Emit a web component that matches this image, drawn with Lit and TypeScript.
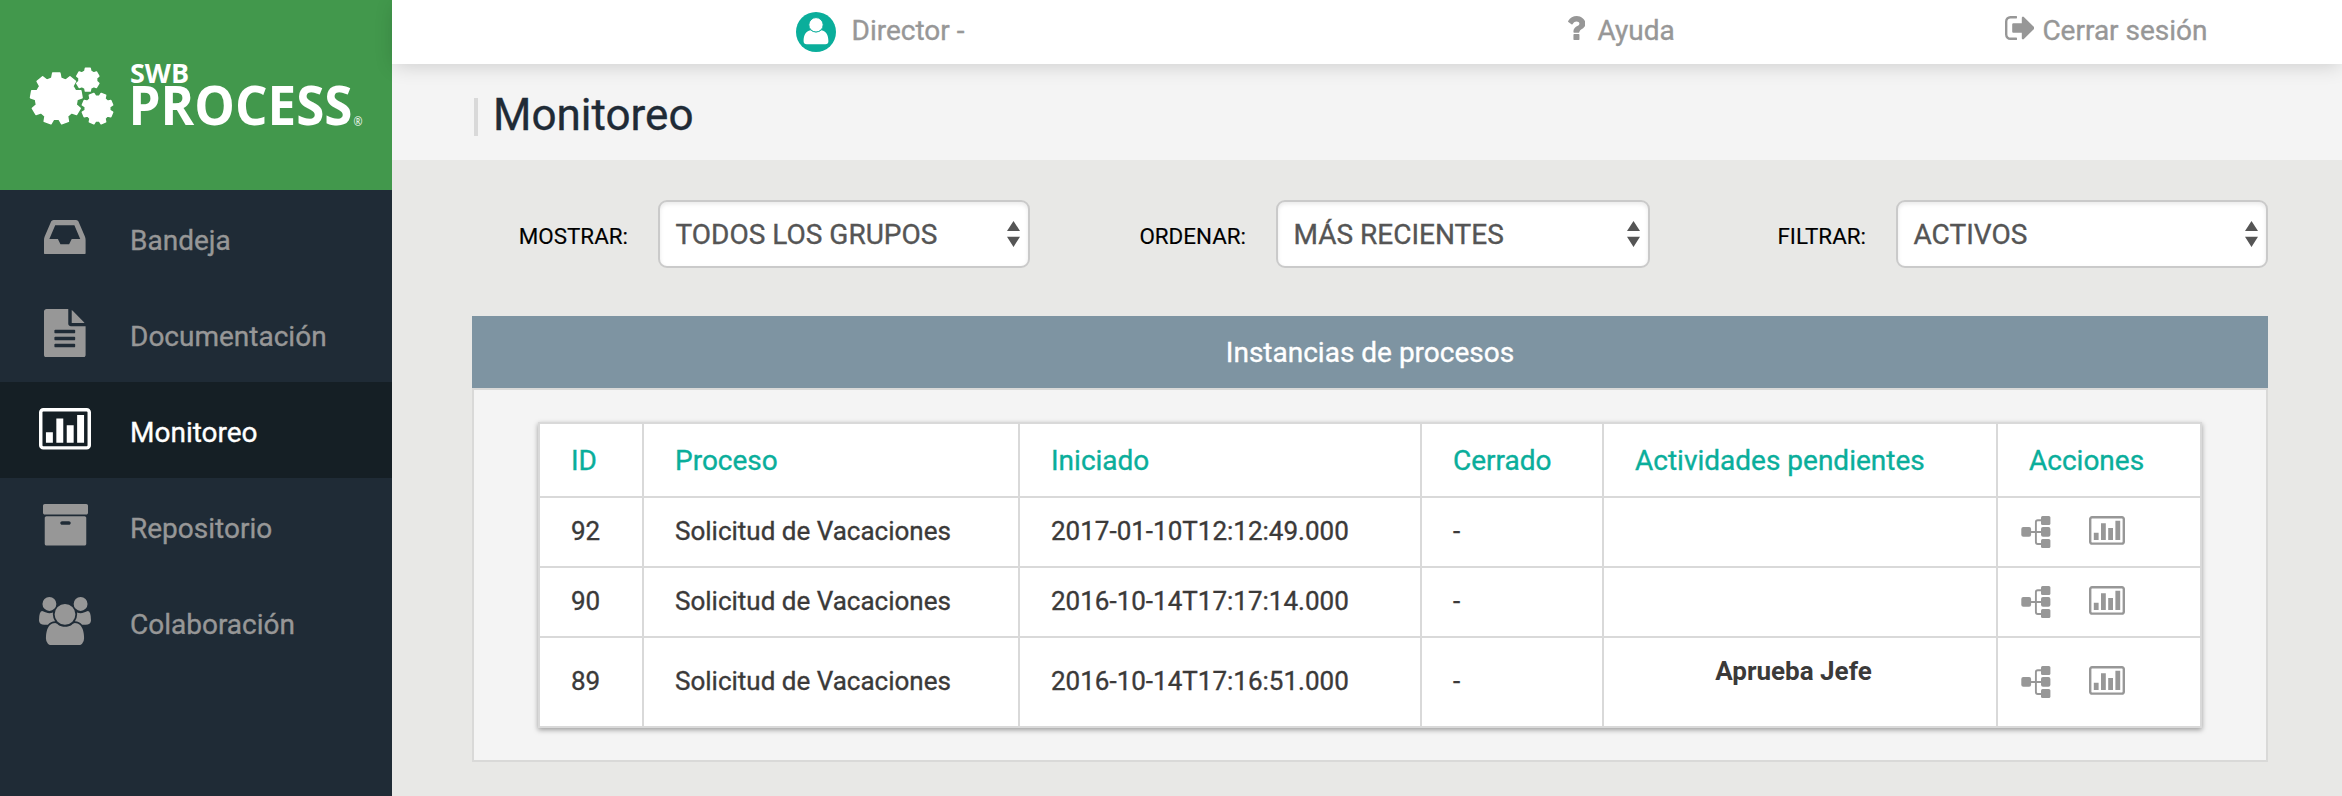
import { LitElement, html, svg, css } from "lit";
import { customElement, property } from "lit/decorators.js";
import { classMap } from "lit/directives/class-map.js";

/** Outline of a gear: trapezoid teeth around a disc. */
function gear(cx: number, cy: number, outer: number, root: number, teeth: number, phase: number): string {
  const step = (Math.PI * 2) / teeth;
  const pts: string[] = [];
  for (let i = 0; i < teeth; i++) {
    const a = phase + i * step;
    const corners: [number, number][] = [
      [root, -0.32], [outer, -0.2], [outer, 0.2], [root, 0.32],
    ];
    for (const [r, f] of corners) {
      const t = a + f * step;
      pts.push(`${(cx + r * Math.cos(t)).toFixed(2)},${(cy + r * Math.sin(t)).toFixed(2)}`);
    }
  }
  return `M${pts.join("L")}Z`;
}

const chart = svg`
  <path fill-rule="evenodd" d="M160 0h1600q66 0 113 47t47 113v1216q0 66-47 113t-113 47h-1600q-66 0-113-47t-47-113v-1216q0-66 47-113t113-47zM160 128q-32 0-32 32v1216q0 32 32 32h1600q32 0 32-32v-1216q0-32-32-32z"/>
  <path d="M256 896h256v384h-256zM640 384h256v896h-256zM1024 640h256v640h-256zM1408 256h256v1024h-256z"/>`;

const icons: Record<string, { box: string; w: number; h: number; art: unknown }> = {
  inbox: {
    box: "0 128 1536 1280", w: 41.6, h: 34.7,
    art: svg`<path d="M1023 832h316q-1-3-2.500-8t-2.500-8l-212-496h-708l-212 496q-1 2-2.500 8t-2.500 8h316l95 192h320zM1536 862v482q0 26-19 45t-45 19h-1408q-26 0-45-19t-19-45v-482q0-62 25-123l238-552q10-25 36.500-42t52.500-17h832q26 0 52.500 17t36.500 42l238 552q25 61 25 123z"/>`,
  },
  file: {
    box: "128 0 1536 1792", w: 41.6, h: 48.6,
    art: svg`<path d="M1596 476q14 14 28 36h-472v-472q22 14 36 28zm-476 164h544v1056q0 40-28 68t-68 28h-1344q-40 0-68-28t-28-68v-1600q0-40 28-68t68-28h800v544q0 40 28 68t68 28zm160 736v-64q0-14-9-23t-23-9h-704q-14 0-23 9t-9 23v64q0 14 9 23t23 9h704q14 0 23-9t9-23zm0-256v-64q0-14-9-23t-23-9h-704q-14 0-23 9t-9 23v64q0 14 9 23t23 9h704q14 0 23-9t9-23zm0-256v-64q0-14-9-23t-23-9h-704q-14 0-23 9t-9 23v64q0 14 9 23t23 9h704q14 0 23-9t9-23z"/>`,
  },
  chart: { box: "0 0 1920 1536", w: 52, h: 41.6, art: chart },
  chartSmall: { box: "0 0 1920 1536", w: 36, h: 28.8, art: chart },
  archive: {
    box: "64 128 1664 1536", w: 45, h: 41.6,
    art: svg`<path d="M1088 832q0-26-19-45t-45-19h-256q-26 0-45 19t-19 45 19 45 45 19h256q26 0 45-19t19-45zm576-192v960q0 26-19 45t-45 19h-1408q-26 0-45-19t-19-45v-960q0-26 19-45t45-19h1408q26 0 45 19t19 45zm64-448v256q0 26-19 45t-45 19h-1536q-26 0-45-19t-19-45v-256q0-26 19-45t45-19h1536q26 0 45 19t19 45z"/>`,
  },
  group: {
    box: "64 0 1920 1792", w: 52, h: 48.6,
    art: svg`<path d="M657 896q-162 5-265 128h-134q-82 0-138-40.500t-56-118.500q0-353 124-353 6 0 43.500 21t97.500 42.500 119 21.500q67 0 133-23-5 37-5 66 0 139 81 256zm1071 637q0 120-73 189.500t-194 69.500h-874q-121 0-194-69.500t-73-189.500q0-53 3.500-103.500t14-109 26.500-108.500 43-97.500 62-81 85.500-53.500 111.500-20q10 0 43 21.500t73 48 107 48 135 21.500 135-21.500 107-48 73-48 43-21.500q61 0 111.500 20t85.500 53.500 62 81 43 97.500 26.500 108.500 14 109 3.500 103.500zm-1024-1277q0 106-75 181t-181 75-181-75-75-181 75-181 181-75 181 75 75 181zm704 384q0 159-112.500 271.500t-271.500 112.500-271.500-112.500-112.500-271.500 112.500-271.500 271.500-112.500 271.500 112.500 112.500 271.500zm576 225q0 78-56 118.500t-138 40.500h-134q-103-123-265-128 81-117 81-256 0-29-5-66 66 23 133 23 59 0 119-21.500t97.500-42.500 43.500-21q124 0 124 353zm-128-609q0 106-75 181t-181 75-181-75-75-181 75-181 181-75 181 75 75 181z"/>`,
  },
  question: {
    box: "94 192 926 1280", w: 17.4, h: 24,
    art: svg`<path d="M704 1192v240q0 16-12 28t-28 12h-240q-16 0-28-12t-12-28v-240q0-16 12-28t28-12h240q16 0 28 12t12 28zM1020 592q0 54-15.500 101t-35 76.500-55 59.500-57.500 43.500-61 35.500q-41 23-68.500 65t-27.500 67q0 17-12 32.500t-28 15.500h-240q-15 0-25.500-18.500t-10.500-37.500v-45q0-83 65-156.500t143-108.500q59-27 84-56t25-76q0-42-46.500-74t-107.500-32q-65 0-108 29-35 25-107 115-13 16-31 16-12 0-25-8l-164-125q-13-10-15.500-25t5.500-28q160-266 464-266 80 0 161 31t146 83 106 127.500 41 158.500z"/>`,
  },
  signout: {
    box: "0 256 1568 1280", w: 29.4, h: 24,
    art: svg`<path d="M640 1440q0 4 1 20t.5 26.500-3 23.500-10 19.500-20.500 6.500h-320q-119 0-203.500-84.500t-84.500-203.500v-704q0-119 84.500-203.500t203.500-84.500h320q13 0 22.500 9.500t9.500 22.500q0 4 1 20t.5 26.500-3 23.500-10 19.500-20.500 6.500h-320q-66 0-113 47t-47 113v704q0 66 47 113t113 47h312l11.500 1 11.500 3 8 5.500 7 9 2 13.500zm928-544q0 26-19 45l-544 544q-19 19-45 19t-45-19-19-45v-288h-448q-26 0-45-19t-19-45v-384q0-26 19-45t45-19h448v-288q0-26 19-45t45-19 45 19l544 544q19 19 19 45z"/>`,
  },
  tree: {
    box: "0 0 30 32", w: 30, h: 32,
    art: svg`<rect x="0.300" y="11" width="9.800" height="9.800" rx="2"/><rect x="20" y="0" width="9.400" height="9" rx="1.500"/><rect x="20" y="11" width="9.400" height="9.800" rx="2"/><rect x="20" y="23" width="9.400" height="9" rx="1.500"/><path d="M8 16h13M21 4.200h-4.200q-1.900 0-1.900 1.900v20q0 1.900 1.900 1.900h4.200" fill="none" stroke="currentColor" stroke-width="1.900"/>`,
  },
  arrows: {
    box: "0 0 13 26", w: 13, h: 26,
    art: svg`<path d="M6.500 0l6.500 10h-13zM6.500 26l6.500-10.300h-13z"/>`,
  },
  user: {
    box: "0 0 40 40", w: 40, h: 40,
    art: svg`<circle cx="20" cy="20" r="20" fill="#0aae9b"/><path fill="#fff" d="M14.500 18.300q5.500 4 11 0c4.700.8 6.900 5 6.900 11q0 3-3 3h-18.800q-3 0-3-3c0-6 2.200-10.200 6.900-11z"/><circle cx="20" cy="12.800" r="7.200" fill="#fff" stroke="#0aae9b" stroke-width="1"/>`,
  },
};

@customElement("app-icon")
export class AppIcon extends LitElement {
  @property() name = "";

  static styles = css`
    :host { display: inline-flex; flex: none; }
    .glyph { display: block; fill: currentColor; }
  `;

  render() {
    const i = icons[this.name];
    return html`<svg class="glyph" width=${i.w} height=${i.h} viewBox=${i.box} preserveAspectRatio="none">${i.art}</svg>`;
  }
}

@customElement("app-root")
export class AppRoot extends LitElement {
  private menu = [
    { icon: "inbox", label: "Bandeja" },
    { icon: "file", label: "Documentación" },
    { icon: "chart", label: "Monitoreo", active: true },
    { icon: "archive", label: "Repositorio" },
    { icon: "group", label: "Colaboración" },
  ];

  private filters = [
    { label: "MOSTRAR:", value: "TODOS LOS GRUPOS" },
    { label: "ORDENAR:", value: "MÁS RECIENTES" },
    { label: "FILTRAR:", value: "ACTIVOS" },
  ];

  private columns = ["ID", "Proceso", "Iniciado", "Cerrado", "Actividades pendientes", "Acciones"];

  private rows = [
    { id: 92, process: "Solicitud de Vacaciones", start: "2017-01-10T12:12:49.000", end: "-", pending: "" },
    { id: 90, process: "Solicitud de Vacaciones", start: "2016-10-14T17:17:14.000", end: "-", pending: "" },
    { id: 89, process: "Solicitud de Vacaciones", start: "2016-10-14T17:16:51.000", end: "-", pending: "Aprueba Jefe" },
  ];

  static styles = css`
    * { box-sizing: border-box; }
    :host {
      display: grid;
      grid-template-columns: 392px 1fr;
      height: 796px;
      overflow: hidden;
      font: 28px/40px Roboto, sans-serif;
      -webkit-text-stroke: 0.350px;
      color: #333;
      background: #e8e8e6;
    }
    .side { background: #1f2b36; }
    .logo { height: 190px; background: #42984c; }
    .logo svg { display: block; -webkit-text-stroke: 0; }
    .logo-text { font-family: "Open Sans", "Noto Sans", sans-serif; font-weight: 700; fill: #fff; }
    .logo-mark { font-family: "Open Sans", sans-serif; font-weight: 600; fill: #e6f3e7; }
    .menu { display: flex; flex-direction: column; }
    .item { display: flex; height: 96px; color: #979797; }
    .item.active { background: #151f25; color: #fff; }
    .item-icon { width: 130px; padding-bottom: 2px; display: flex; align-items: center; justify-content: center; }
    .item-label { padding-top: 31px; }

    .main { display: flex; flex-direction: column; min-width: 0; }
    .top {
      height: 64px;
      background: #fff;
      box-shadow: 0 4px 20px -2px rgba(0, 0, 0, 0.16);
      z-index: 1;
      display: grid;
      grid-template-columns: 404px 771px 437px 1fr;
      color: #979797;
    }
    .link { display: flex; align-items: flex-start; grid-row: 1; }
    .link.user { grid-column: 2; padding-top: 12px; gap: 15.500px; }
    .link.user span { margin-top: -1px; }
    .link.help { grid-column: 3; padding: 11px 0 0 1px; gap: 12px; }
    .link.exit { grid-column: 4; padding: 11px 0 0 1px; gap: 8px; }
    .link.help app-icon, .link.exit app-icon { margin-top: 5px; }
    .band { height: 96px; background: #f4f4f4; display: flex; padding: 34px 0 0 82px; }
    .title {
      margin: 0;
      height: 38px;
      border-left: 4.500px solid #d9d9d9;
      padding-left: 15px;
      font-size: 44px;
      font-weight: 400;
      line-height: 35px;
      color: #1f2b36;
    }
    .content { padding: 40px 74px 0 80px; display: flex; flex-direction: column; }
    .filters {
      display: grid;
      grid-template-columns: 186px 372px 246px 374px 246px 372px;
      height: 116px;
      align-items: start;
    }
    .filter-label {
      text-align: right;
      padding-right: 30px;
      font-size: 22.400px;
      line-height: 32px;
      padding-top: 20px;
      color: #000;
      -webkit-text-stroke: 0.150px;
    }
    .select {
      height: 68px;
      border: 2px solid #cacaca;
      border-radius: 9px;
      background: #fff;
      box-shadow: inset 0 2px 4px rgba(0, 0, 0, 0.09);
      display: flex;
      justify-content: space-between;
      align-items: center;
      padding: 0 8px 0 15.500px;
      color: #555;
    }
    .select-text { padding-top: 1px; }
    .panel-head {
      height: 72px;
      background: #7e94a2;
      color: #fff;
      text-align: center;
      line-height: 73px;
    }
    .panel-body {
      height: 374px;
      border: 2px solid #d9d9d8;
      background: #f4f4f4;
      padding: 32px 64px 0;
    }
    .grid {
      width: 1664px;
      border: 2px solid #d9d9d9;
      background: #d9d9d9;
      box-shadow: 0 2px 5px rgba(0, 0, 0, 0.36);
      display: grid;
      grid-template-columns: 102px 374px 400px 180px 392px 202px;
      grid-template-rows: 72px 68px 68px 88px;
      gap: 2px;
    }
    .cell {
      background: #fff;
      padding: 0 30px 2px 31px;
      display: flex;
      align-items: center;
      white-space: nowrap;
      font-size: 26px;
      color: #3b3a39;
    }
    .cell.head { color: #0aae9b; font-size: 28px; padding-bottom: 0; padding-top: 1px; }
    .cell.pending { padding: 13px 43px 0 30px; align-items: flex-start; justify-content: center; font-weight: 700; -webkit-text-stroke: 0; }
    .cell.actions { padding: 0 0 0 23px; gap: 37.500px; color: #979797; }
    .cell.actions .shift { padding-bottom: 3px; }
  `;

  private renderLogo() {
    const up = -Math.PI / 2;
    return svg`<svg width="392" height="190" viewBox="0 0 392 190">
      <g fill="#fff" stroke="#fff" stroke-width="1.500" stroke-linejoin="round">
        <path d=${gear(56.3, 98.6, 25.8, 20.8, 9, up)} />
        <path d=${gear(87.8, 79.7, 11.6, 9, 6, up)} />
        <path d=${gear(97.5, 108.6, 15.6, 12.4, 8, up + Math.PI / 8)} />
      </g>
      <text class="logo-text" x="130" y="83.300" font-size="27.500" textLength="59" lengthAdjust="spacingAndGlyphs">SWB</text>
      <text class="logo-text" x="128.500" y="124.500" font-size="53.500" textLength="224" lengthAdjust="spacingAndGlyphs">PROCESS</text>
      <text class="logo-mark" x="353.500" y="126" font-size="12" textLength="9" lengthAdjust="spacingAndGlyphs">®</text>
    </svg>`;
  }

  render() {
    return html`
      <nav class="side">
        <div class="logo">${this.renderLogo()}</div>
        <div class="menu">
          ${this.menu.map(
            (m) => html`<div class=${classMap({ item: true, active: !!m.active })}>
              <span class="item-icon"><app-icon name=${m.icon}></app-icon></span>
              <span class="item-label">${m.label}</span>
            </div>`
          )}
        </div>
      </nav>
      <main class="main">
        <header class="top">
          <div class="link user"><app-icon name="user"></app-icon><span>Director -</span></div>
          <div class="link help"><app-icon name="question"></app-icon><span>Ayuda</span></div>
          <div class="link exit"><app-icon name="signout"></app-icon><span>Cerrar sesión</span></div>
        </header>
        <div class="band"><h1 class="title">Monitoreo</h1></div>
        <section class="content">
          <div class="filters">
            ${this.filters.map(
              (f) => html`<label class="filter-label">${f.label}</label>
                <div class="select"><span class="select-text">${f.value}</span><app-icon name="arrows"></app-icon></div>`
            )}
          </div>
          <div class="panel-head">Instancias de procesos</div>
          <div class="panel-body">
            <div class="grid">
              ${this.columns.map((c) => html`<div class="cell head">${c}</div>`)}
              ${this.rows.map(
                (r) => html`
                  <div class="cell">${r.id}</div>
                  <div class="cell">${r.process}</div>
                  <div class="cell">${r.start}</div>
                  <div class="cell">${r.end}</div>
                  <div class="cell pending">${r.pending}</div>
                  <div class="cell actions">
                    <app-icon name="tree"></app-icon><app-icon class="shift" name="chartSmall"></app-icon>
                  </div>`
              )}
            </div>
          </div>
        </section>
      </main>
    `;
  }
}
